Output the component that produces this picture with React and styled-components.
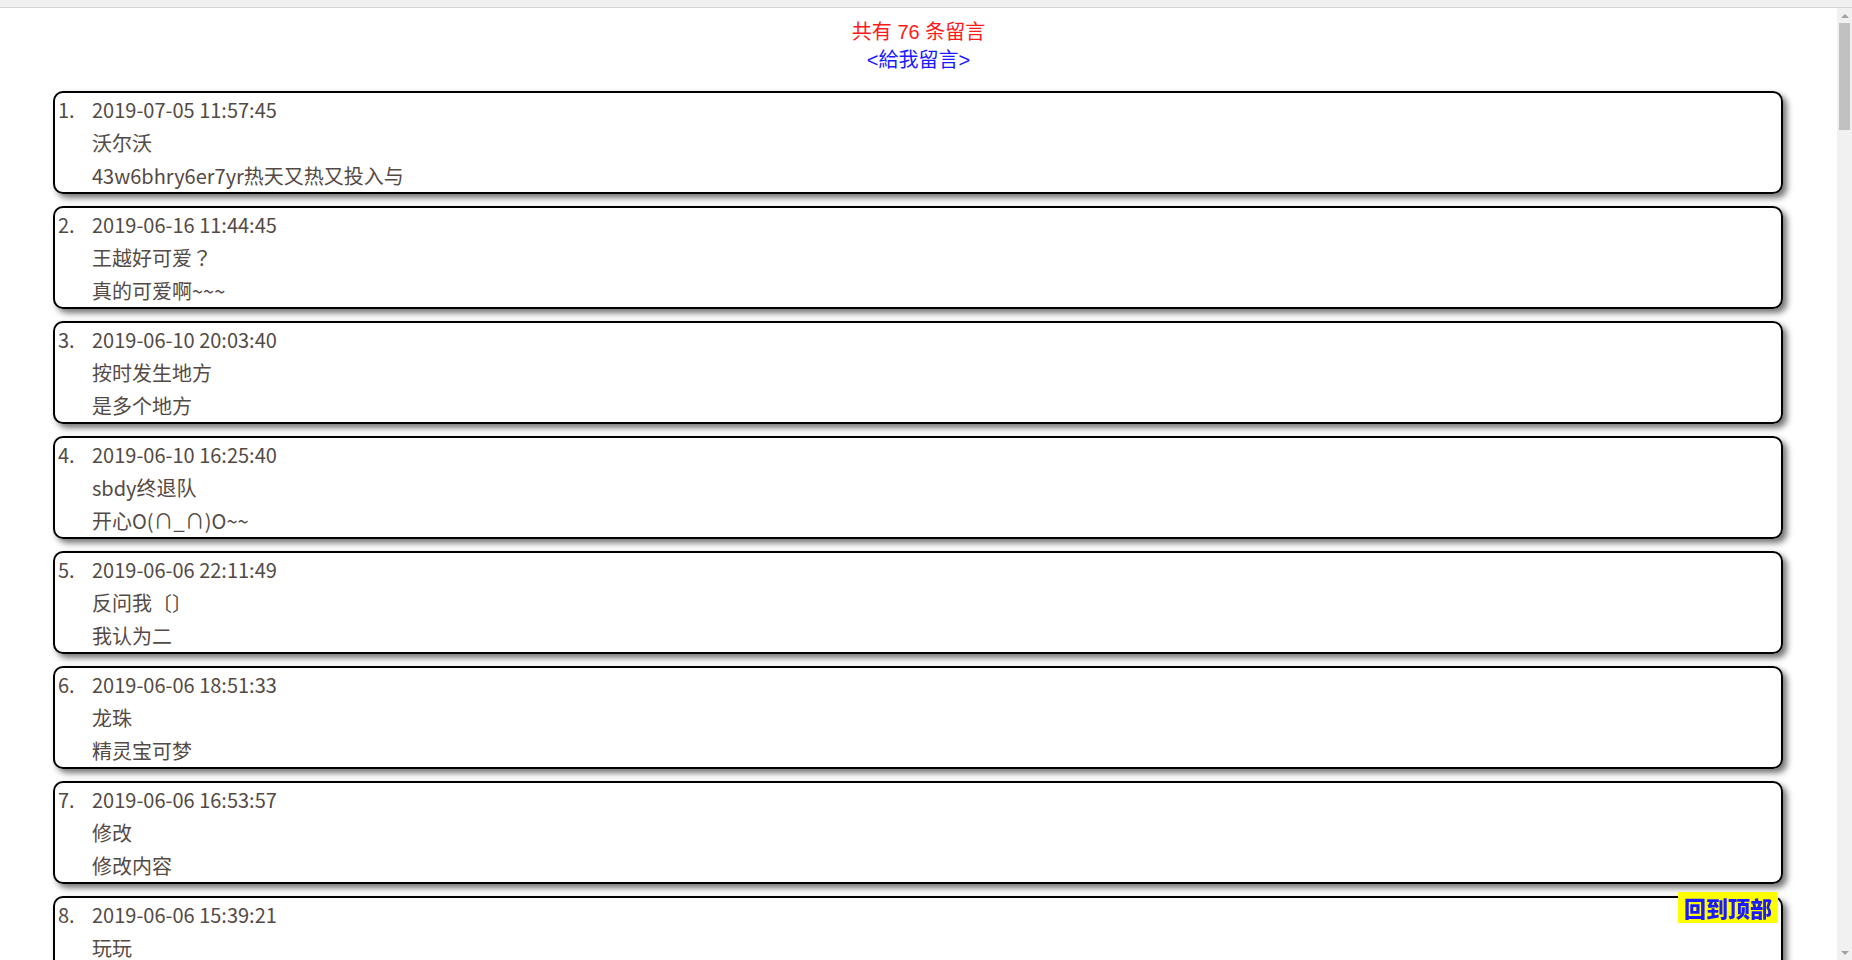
import React from "react";
import styled, { createGlobalStyle } from "styled-components";

const GlobalStyle = createGlobalStyle`
	html, body {
		margin: 0;
		padding: 0;
		height: 100%;
		overflow: hidden;
		background: #fff;
	}
`;

const Page = styled.div`
	display: flex;
	flex-direction: column;
	height: 100vh;
`;

const TopStrip = styled.div`
	flex: 0 0 7px;
	background: #f0f0f0;
	border-bottom: 1px solid #d4d4d4;
`;

const Body = styled.div`
	flex: 1;
	display: flex;
	min-height: 0;
`;

const Scroller = styled.div`
	flex: 1;
	overflow: hidden;
	font-family: "Noto Sans CJK SC", "Noto Sans", sans-serif;
`;

const Rail = styled.div`
	flex: 0 0 15px;
	display: flex;
	flex-direction: column;
	align-items: center;
	background: #f1f1f1;
`;

const Arrow = styled.div`
	flex: 0 0 15px;
	display: flex;
	align-items: center;
	justify-content: center;
	&::after {
		content: "";
		border-left: 4px solid transparent;
		border-right: 4px solid transparent;
		${({ $down }) =>
			$down ? "border-top: 4px solid #a3a3a3;" : "border-bottom: 4px solid #a3a3a3;"}
	}
`;

const Thumb = styled.div`
	width: 11px;
	height: 107px;
	background: #c1c1c1;
`;

const RailSpace = styled.div`
	flex: 1;
`;

const Header = styled.div`
	padding-top: 10px;
	text-align: center;
	font-family: "Liberation Sans", "Noto Sans CJK SC", sans-serif;
	font-size: 20px;
	line-height: 28px;
`;

const Count = styled.div`
	color: #ff1a1a;
`;

const WriteLink = styled.a`
	color: #1a1aff;
	text-decoration: none;
	font-family: "Liberation Sans", "Noto Sans CJK TC", sans-serif;
`;

const List = styled.div`
	padding: 17px 0 20px;
`;

const Card = styled.div`
	display: flex;
	margin: 0 54px 12px 53px;
	border: 2px solid #000;
	border-radius: 10px;
	box-shadow: 4px 4px 6px rgba(0, 0, 0, 0.55);
	color: #544a45;
	font-size: 20px;
	line-height: 33px;
`;

const Index = styled.div`
	flex: 0 0 34px;
	padding-left: 3px;
`;

const Lines = styled.div`
	display: flex;
	flex-direction: column;
`;

const Punct = styled.span`
	font-family: "Noto Sans CJK TC", sans-serif;
`;

const BackTop = styled.a`
	position: fixed;
	right: 74px;
	bottom: 37px;
	width: 100px;
	height: 31px;
	background: #ffff00;
	color: #1a1aff;
	font-family: "Noto Sans CJK SC", sans-serif;
	font-weight: 900;
	font-size: 22px;
	line-height: 31px;
	text-align: center;
	text-decoration: none;
`;

const first = [
	["2019-07-05 11:57:45", "沃尔沃", "43w6bhry6er7yr热天又热又投入与"],
	["2019-06-16 11:44:45", <>王越好可爱<Punct>？</Punct></>, "真的可爱啊~~~"],
	["2019-06-10 20:03:40", "按时发生地方", "是多个地方"],
	["2019-06-10 16:25:40", "sbdy终退队", "开心O(∩_∩)O~~"],
	["2019-06-06 22:11:49", "反问我〔〕", "我认为二"],
	["2019-06-06 18:51:33", "龙珠", "精灵宝可梦"],
	["2019-06-06 16:53:57", "修改", "修改内容"],
	["2019-06-06 15:39:21", "玩玩", "好玩"],
];

const names = ["留言", "测试", "你好", "哈哈", "路过", "加油", "签到", "打卡"];
const bodies = ["测试内容", "写得不错", "来看看", "支持一下", "很好", "第一次来", "顶一下", "再来一条"];

const pad = (n) => String(n).padStart(2, "0");

const messages = first.concat(
	Array.from({ length: 68 }, (_, i) => {
		const day = 5 - Math.floor(i / 14);
		const h = 23 - (i % 14);
		return [
			`2019-06-${pad(Math.max(day, 1))} ${pad(h)}:${pad((i * 17) % 60)}:${pad((i * 31) % 60)}`,
			names[i % names.length],
			bodies[(i * 3) % bodies.length],
		];
	})
);

const App = () => {
	return (
		<Page>
			<GlobalStyle />
			<TopStrip />
			<Body>
				<Scroller>
					<Header>
						<Count>共有 {messages.length} 条留言</Count>
						<WriteLink href="#write">&lt;給我留言&gt;</WriteLink>
					</Header>
					<List>
						{messages.map(([date, name, body], i) => (
							<Card key={i}>
								<Index>{i + 1}.</Index>
								<Lines>
									<span>{date}</span>
									<span>{name}</span>
									<span>{body}</span>
								</Lines>
							</Card>
						))}
					</List>
				</Scroller>
				<Rail>
					<Arrow />
					<Thumb />
					<RailSpace />
					<Arrow $down />
				</Rail>
			</Body>
			<BackTop href="#top">回到顶部</BackTop>
		</Page>
	);
};

export default App;
